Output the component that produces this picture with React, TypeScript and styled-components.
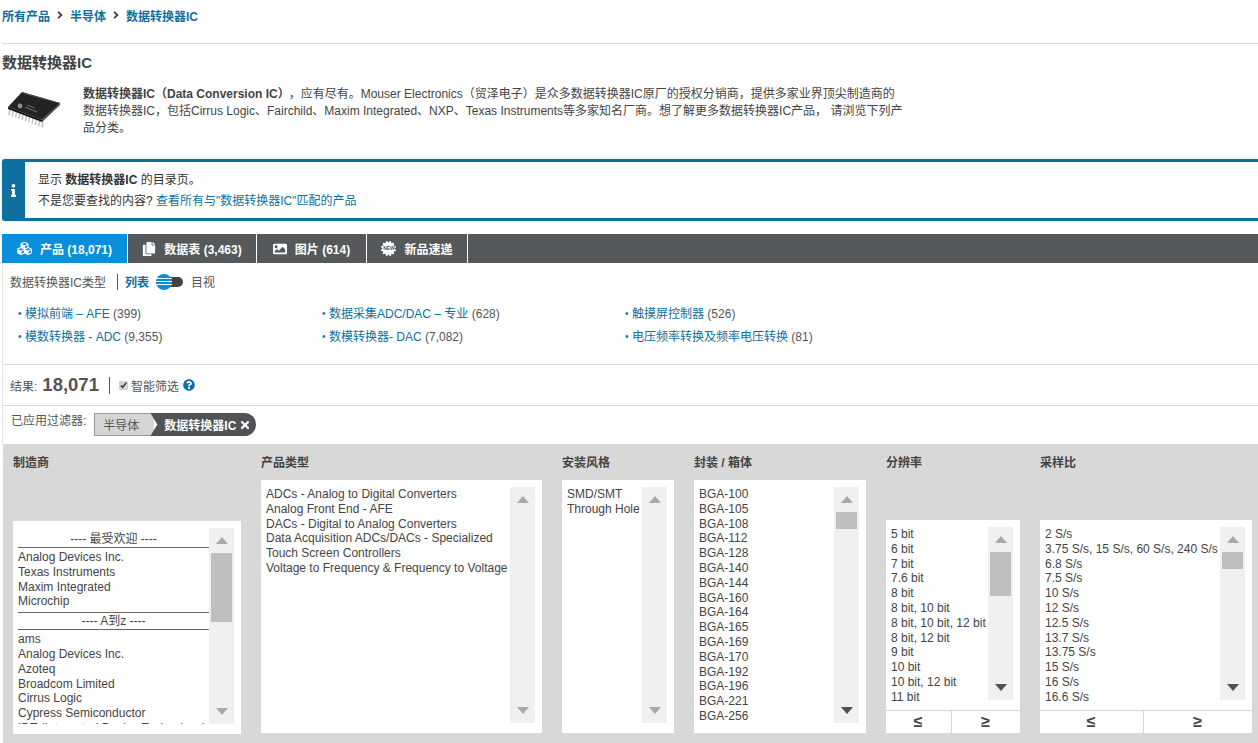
import React from 'react'
import styled, { createGlobalStyle } from 'styled-components'
import { FaAngleRight, FaCertificate, FaCopy, FaCubes, FaImage, FaInfo, FaQuestionCircle, FaTimes } from 'react-icons/fa'

const FONT = '"Liberation Sans", "Noto Sans CJK SC", sans-serif'

type Entry = string | { header: string; divided?: boolean }

type ListProps = {
  items: Entry[]
  thumbTop?: number
  thumbHeight?: number
  active?: boolean
  open?: boolean
}

const makers: Entry[] = [
  { header: '---- 最受欢迎 ----' },
  'Analog Devices Inc.',
  'Texas Instruments',
  'Maxim Integrated',
  'Microchip',
  { header: '---- A到z ----', divided: true },
  'ams',
  'Analog Devices Inc.',
  'Azoteq',
  'Broadcom Limited',
  'Cirrus Logic',
  'Cypress Semiconductor',
  'IDT (Integrated Device Technology)',
]

const types = [
  'ADCs - Analog to Digital Converters',
  'Analog Front End - AFE',
  'DACs - Digital to Analog Converters',
  'Data Acquisition ADCs/DACs - Specialized',
  'Touch Screen Controllers',
  'Voltage to Frequency & Frequency to Voltage',
]

const packages = ['100', '105', '108', '112', '128', '140', '144', '160', '164', '165', '169', '170', '192', '196', '221', '256'].map(n => `BGA-${n}`)

const bits = ['5 bit', '6 bit', '7 bit', '7.6 bit', '8 bit', '8 bit, 10 bit', '8 bit, 10 bit, 12 bit', '8 bit, 12 bit', '9 bit', '10 bit', '10 bit, 12 bit', '11 bit']

const rates = ['2 S/s', '3.75 S/s, 15 S/s, 60 S/s, 240 S/s', '6.8 S/s', '7.5 S/s', '10 S/s', '12 S/s', '12.5 S/s', '13.7 S/s', '13.75 S/s', '15 S/s', '16 S/s', '16.6 S/s']

const ListBox = ({ items, thumbTop, thumbHeight, active, open }: ListProps) => (
  <ListFrame>
    <ListItems $open={open}>
      {items.map((item, i) =>
        typeof item === 'string' ? (
          <Item key={i}>{item}</Item>
        ) : (
          <GroupHeader key={i} $divided={item.divided}>
            {item.header}
          </GroupHeader>
        )
      )}
    </ListItems>
    <Track>
      <Arrow $up $active={false} />
      {thumbHeight ? <Thumb style={{ top: thumbTop, height: thumbHeight }} /> : null}
      <Arrow $active={!!active} />
    </Track>
  </ListFrame>
)

const ChipImage = () => (
  <svg width="58" height="40" viewBox="0 0 58 40">
    <g stroke="#b9b9b9" strokeWidth="1.3">
      {[0, 1, 2, 3, 4, 5, 6, 7, 8, 9, 10].map(i => (
        <line key={i} x1={4 + i * 3.3} y1={21 + i * 1.25} x2={3 + i * 3.3} y2={27 + i * 1.25} />
      ))}
    </g>
    <polygon points="16,4 54,15 36,32 2,19" fill="#232323" />
    <polygon points="16,4 54,15 54,17 36,34 36,32 53,15.5 16,5.5" fill="#4a4a4a" />
    <polygon points="2,19 36,32 36,34 2,21" fill="#0e0e0e" />
    <circle cx="14" cy="18" r="2.4" fill="#8f8f8f" />
    <line x1="19" y1="19" x2="31" y2="24" stroke="#777" strokeWidth="1" />
    <line x1="21" y1="17" x2="29" y2="20" stroke="#666" strokeWidth="1" />
  </svg>
)

const ListToggle = () => (
  <Toggle>
    <ToggleKnob>
      <i />
      <i />
      <i />
    </ToggleKnob>
  </Toggle>
)

const App = () => (
  <Page>
    <Global />
    <Breadcrumb>
      <a>所有产品</a>
      <Crumb />
      <a>半导体</a>
      <Crumb />
      <a>数据转换器IC</a>
    </Breadcrumb>
    <Title>数据转换器IC</Title>
    <Intro>
      <ChipWrap>
        <ChipImage />
      </ChipWrap>
      <IntroText>
        <b>数据转换器IC（Data Conversion IC）</b>，应有尽有。Mouser Electronics（贸泽电子）是众多数据转换器IC原厂的授权分销商，提供多家业界顶尖制造商的数据转换器IC，包括Cirrus Logic、Fairchild、Maxim Integrated、NXP、Texas Instruments等多家知名厂商。想了解更多数据转换器IC产品， 请浏览下列产品分类。
      </IntroText>
    </Intro>
    <Notice>
      <NoticeBadge>
        <FaInfo />
      </NoticeBadge>
      <NoticeBody>
        <p>
          显示 <b>数据转换器IC</b> 的目录页。
        </p>
        <p>
          不是您要查找的内容? <a>查看所有与"数据转换器IC"匹配的产品</a>
        </p>
      </NoticeBody>
    </Notice>
    <Tabs>
      <Tab $active $width={126}>
        <FaCubes size={15} />
        产品 (18,071)
      </Tab>
      <Tab $width={129}>
        <FaCopy size={14} />
        数据表 (3,463)
      </Tab>
      <Tab $width={110}>
        <FaImage size={14} />
        图片 (614)
      </Tab>
      <Tab $width={101}>
        <NewBadge>
          <FaCertificate size={15} />
          <span>NEW</span>
        </NewBadge>
        新品速递
      </Tab>
    </Tabs>
    <Section>
      <TypeBar>
        <span>数据转换器IC类型</span>
        <TypeDivider />
        <a>列表</a>
        <ListToggle />
        <span>目视</span>
      </TypeBar>
      <Categories>
        <Category><a>模拟前端 – AFE</a> (399)</Category>
        <Category><a>数据采集ADC/DAC – 专业</a> (628)</Category>
        <Category><a>触摸屏控制器</a> (526)</Category>
        <Category><a>模数转换器 - ADC</a> (9,355)</Category>
        <Category><a>数模转换器- DAC</a> (7,082)</Category>
        <Category><a>电压频率转换及频率电压转换</a> (81)</Category>
      </Categories>
    </Section>
    <ResultBar>
      结果:
      <ResultCount>18,071</ResultCount>
      <ResultDivider />
      <SmartFilter>
        <input type="checkbox" defaultChecked />
        智能筛选
      </SmartFilter>
      <FaQuestionCircle size={12} color="#0f6fa8" />
    </ResultBar>
    <AppliedBar>
      <AppliedLabel>已应用过滤器:</AppliedLabel>
      <Pills>
        <PillLight>半导体</PillLight>
        <PillDark>
          数据转换器IC <FaTimes size={12} />
        </PillDark>
      </Pills>
    </AppliedBar>
    <FilterPanel>
      <FilterColumn $width={228}>
        <FilterLabel>制造商</FilterLabel>
        <ListBoxSlot $height={213} $drop={1}>
          <ListBox items={makers} thumbTop={25} thumbHeight={69} />
        </ListBoxSlot>
      </FilterColumn>
      <FilterColumn $width={281}>
        <FilterLabel>产品类型</FilterLabel>
        <ListBoxSlot $height={253}>
          <ListBox items={types} />
        </ListBoxSlot>
      </FilterColumn>
      <FilterColumn $width={112}>
        <FilterLabel>安装风格</FilterLabel>
        <ListBoxSlot $height={253}>
          <ListBox items={['SMD/SMT', 'Through Hole']} />
        </ListBoxSlot>
      </FilterColumn>
      <FilterColumn $width={172}>
        <FilterLabel>封装 / 箱体</FilterLabel>
        <ListBoxSlot $height={253}>
          <ListBox items={packages} thumbTop={25} thumbHeight={17} active />
        </ListBoxSlot>
      </FilterColumn>
      <FilterColumn $width={134}>
        <FilterLabel>分辨率</FilterLabel>
        <ListBoxSlot $height={190}>
          <ListBox items={bits} thumbTop={25} thumbHeight={44} active open />
        </ListBoxSlot>
        <CompareRow>
          <CompareButton $grow={65}>≤</CompareButton>
          <CompareButton $grow={69}>≥</CompareButton>
        </CompareRow>
      </FilterColumn>
      <FilterColumn $width={212}>
        <FilterLabel>采样比</FilterLabel>
        <ListBoxSlot $height={190}>
          <ListBox items={rates} thumbTop={25} thumbHeight={17} active open />
        </ListBoxSlot>
        <CompareRow>
          <CompareButton $grow={103}>≤</CompareButton>
          <CompareButton $grow={109}>≥</CompareButton>
        </CompareRow>
      </FilterColumn>
    </FilterPanel>
  </Page>
)

const Global = createGlobalStyle`
  html, body {
    margin: 0;
    overflow: hidden;
    background: #fff;
  }
  * {
    box-sizing: border-box;
  }
`

const Page = styled.div`
  width: 1258px;
  height: 743px;
  overflow: hidden;
  padding-left: 2px;
  font-family: ${FONT};
  font-size: 12px;
  color: #444;

  a {
    color: #0f6f9e;
  }
`

const Breadcrumb = styled.nav`
  display: flex;
  align-items: center;
  gap: 3px;
  height: 44px;
  padding-bottom: 13px;
  border-bottom: 1px solid #d9d9d9;
  font-weight: bold;
  font-size: 12px;
`

const Crumb = styled(FaAngleRight)`
  color: #444;
  font-size: 12px;
  margin: 0 1px;
`

const Title = styled.h1`
  margin: 0;
  height: 37px;
  padding-top: 9px;
  font-size: 15px;
  line-height: 20px;
  font-weight: bold;
  color: #444;
`

const Intro = styled.div`
  display: flex;
  height: 78px;
  padding-top: 5px;
`

const ChipWrap = styled.div`
  width: 81px;
  padding: 2px 0 0 4px;
`

const IntroText = styled.p`
  margin: 0;
  width: 822px;
  font-size: 12px;
  line-height: 17px;

  b {
    font-weight: bold;
    margin-right: 5px;
  }
`

const Notice = styled.div`
  display: flex;
  height: 62px;
  background: #0f6f9e;
  border-radius: 3px 0 0 3px;
  padding: 3px 0;
  box-shadow: 0 0 3px rgba(15, 111, 158, 0.25);
`

const NoticeBadge = styled.div`
  width: 23px;
  display: flex;
  align-items: center;
  justify-content: center;
  color: #fff;
  font-size: 13px;
`

const NoticeBody = styled.div`
  flex: 1;
  background: #fff;
  padding: 8px 13px;
  color: #333;

  p {
    margin: 0;
    line-height: 20.5px;
    font-size: 12px;
  }
`

const Tabs = styled.div`
  display: flex;
  height: 29px;
  margin-top: 13px;
  background: #55595c;
`

const Tab = styled.div<{ $active?: boolean; $width: number }>`
  display: flex;
  align-items: center;
  justify-content: center;
  gap: 8px;
  width: ${props => props.$width}px;
  border-right: 1px solid #fff;
  background: ${props => (props.$active ? '#0a8fdc' : '#55595c')};
  color: #fff;
  font-weight: bold;
  font-size: 12px;
`

const NewBadge = styled.span`
  position: relative;
  display: flex;

  span {
    position: absolute;
    left: 0;
    right: 0;
    top: 5px;
    text-align: center;
    font-size: 5px;
    line-height: 5px;
    color: #55595c;
  }
`

const Section = styled.section`
  height: 102px;
  border-left: 1px solid #e4e4e4;
  border-bottom: 1px solid #dcdcdc;
`

const TypeBar = styled.div`
  display: flex;
  align-items: center;
  height: 36px;
  padding: 1px 0 0 7px;
  color: #555;

  a {
    font-weight: bold;
  }
`

const TypeDivider = styled.div`
  width: 1px;
  height: 16px;
  margin: 0 7px 0 11px;
  background: #555;
`

const Toggle = styled.div`
  position: relative;
  width: 27px;
  height: 10px;
  margin: 0 8px 0 7px;
  border-radius: 5px;
  background: #444;
`

const ToggleKnob = styled.div`
  position: absolute;
  left: 0;
  top: -3px;
  width: 16px;
  height: 16px;
  display: flex;
  flex-direction: column;
  justify-content: center;
  gap: 2px;
  border-radius: 50%;
  background: #0a8fdc;

  i {
    display: block;
    height: 1px;
    background: #fff;
  }
`

const Categories = styled.div`
  display: grid;
  grid-template-columns: 304px 303px 1fr;
  grid-auto-rows: 23px;
  padding: 3px 0 0 15px;
`

const Category = styled.div`
  line-height: 23px;
  color: #555;

  &::before {
    content: '•';
    color: #0f6f9e;
    margin-right: 3.5px;
    font-size: 10px;
    vertical-align: 1px;
  }
`

const ResultBar = styled.div`
  display: flex;
  align-items: center;
  height: 41px;
  padding-left: 7px;
  border-left: 1px solid #e4e4e4;
  border-bottom: 1px solid #dcdcdc;
  color: #555;
`

const ResultCount = styled.strong`
  margin-left: 5px;
  font-size: 18.5px;
  color: #555;
`

const ResultDivider = styled.div`
  width: 1px;
  height: 17px;
  margin: 0 9px 0 10px;
  background: #555;
`

const SmartFilter = styled.label`
  display: flex;
  align-items: center;
  gap: 3px;
  margin-right: 4px;

  input {
    width: 9px;
    height: 9px;
    margin: 0;
    accent-color: #d4d4d4;
  }
`

const AppliedBar = styled.div`
  display: flex;
  align-items: flex-start;
  gap: 8px;
  height: 38px;
  padding: 7px 0 0 8px;
  border-left: 1px solid #e4e4e4;
  color: #555;
`

const AppliedLabel = styled.span`
  line-height: 16px;
`

const Pills = styled.div`
  display: flex;
  height: 23px;
`

const PillLight = styled.span`
  display: flex;
  align-items: center;
  width: 60px;
  padding-left: 8px;
  background: #d5d5d5;
  border: 1px solid #9a9a9a;
  border-right: none;
  color: #555;
`

const PillDark = styled.span`
  display: flex;
  align-items: center;
  gap: 3px;
  padding: 0 5px 0 14px;
  margin-left: -4px;
  background: #4f5356;
  color: #fff;
  font-weight: bold;
  border-radius: 0 12px 12px 0;
  clip-path: polygon(0 0, 100% 0, 100% 100%, 0 100%, 7px 50%);
`

const FilterPanel = styled.div`
  display: flex;
  gap: 20px;
  height: 299px;
  margin-left: 1px;
  padding: 10px 0 10px 10px;
  background: #d8d8d8;
`

const FilterColumn = styled.div<{ $width: number }>`
  display: flex;
  flex-direction: column;
  flex: none;
  width: ${props => props.$width}px;
`

const FilterLabel = styled.div`
  margin-top: 1px;
  margin-bottom: auto;
  line-height: 16px;
  font-weight: bold;
  color: #444;
`

const ListBoxSlot = styled.div<{ $height: number; $drop?: number }>`
  height: ${props => props.$height}px;
  margin-bottom: ${props => -(props.$drop || 0)}px;
`

const ListFrame = styled.div`
  display: flex;
  height: 100%;
  padding: 7px 7px 10px 5px;
  background: #fff;
`

const ListItems = styled.div<{ $open?: boolean }>`
  flex: 1;
  min-width: 0;
  overflow: ${props => (props.$open ? 'visible' : 'hidden')};
  white-space: nowrap;
`

const Item = styled.div`
  line-height: 14.8px;
  color: #444;
`

const GroupHeader = styled.div<{ $divided?: boolean }>`
  line-height: 15px;
  margin-top: ${props => (props.$divided ? '3px' : '4px')};
  margin-bottom: 2px;
  padding-top: ${props => (props.$divided ? '1px' : '0')};
  border-top: ${props => (props.$divided ? '1px solid #666' : 'none')};
  border-bottom: 1px solid #666;
  text-align: center;
  color: #444;
`

const Track = styled.div`
  position: relative;
  flex: none;
  width: 25px;
  display: flex;
  flex-direction: column;
  justify-content: space-between;
  align-items: center;
  padding: 9px 0;
  background: #f0f0f0;
`

const Thumb = styled.div`
  position: absolute;
  left: 2px;
  right: 2px;
  background: #bfbfbf;
`

const Arrow = styled.div<{ $up?: boolean; $active: boolean }>`
  width: 0;
  height: 0;
  border-left: 6px solid transparent;
  border-right: 6px solid transparent;
  border-bottom: ${props => (props.$up ? '7px solid #a9a9a9' : 'none')};
  border-top: ${props => (props.$up ? 'none' : `7px solid ${props.$active ? '#505050' : '#a9a9a9'}`)};
`

const CompareRow = styled.div`
  display: flex;
  height: 23px;
  background: #fff;
  border-top: 1px solid #d8d8d8;
`

const CompareButton = styled.div<{ $grow: number }>`
  flex: ${props => props.$grow};
  display: flex;
  align-items: center;
  justify-content: center;
  font-size: 16px;
  font-weight: bold;
  color: #444;

  & + & {
    border-left: 1px solid #d8d8d8;
  }
`

export default App
